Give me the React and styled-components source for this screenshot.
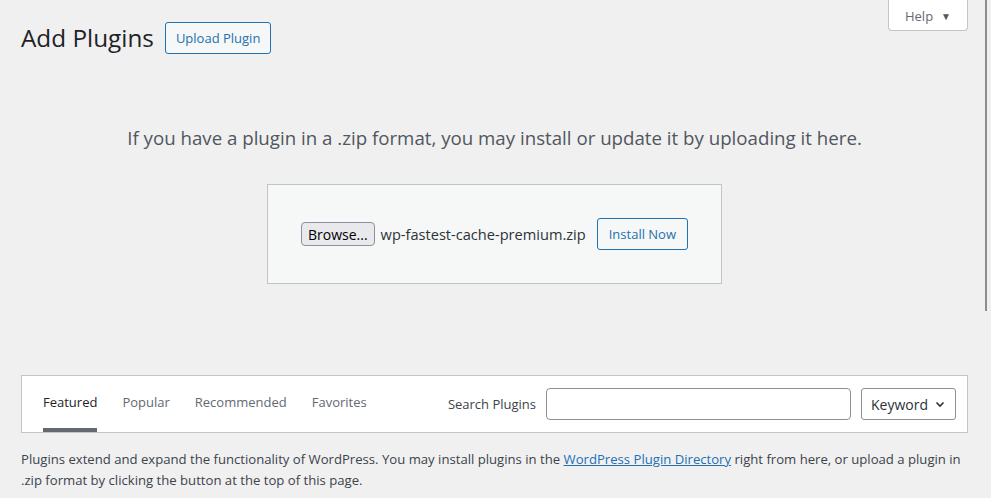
import React from "react";
import styled, { createGlobalStyle } from "styled-components";

const Global = createGlobalStyle`
  html, body { margin: 0; padding: 0; background: #f0f0f1; }
  body { font-family: "Open Sans", "Noto Sans", sans-serif; color: #3c434a; font-size: 13px; }
  * { box-sizing: border-box; }
`;

const Page = styled.div`
  width: 991px;
  height: 498px;
  overflow: hidden;
  padding: 0 23px 0 21px;
  display: flex;
  flex-direction: column;
`;

const TopRow = styled.div`
  display: flex;
  align-items: flex-start;
`;

const TitleGroup = styled.div`
  display: flex;
  align-items: center;
  gap: 11px;
  margin-top: 22px;
  height: 32px;
`;

const Title = styled.h1`
  margin: 0;
  font-size: 24.3px;
  font-weight: 400;
  color: #1d2327;
  line-height: 32px;
`;

const OutlineButton = styled.button`
  font-family: inherit;
  font-size: 13px;
  height: 32px;
  padding: 0 ${p => p.$pad || 10}px;
  border: 1px solid #2271b1;
  border-radius: 3px;
  background: #f6f7f7;
  color: #2271b1;
  cursor: pointer;
`;

const HelpTab = styled.button`
  margin-left: auto;
  width: 80px;
  height: 31px;
  font-family: inherit;
  font-size: 13px;
  color: #646970;
  background: #fff;
  border: 1px solid #c3c4c7;
  border-top: none;
  border-radius: 0 0 4px 4px;
  display: flex;
  align-items: center;
  justify-content: center;
  gap: 8px;
  padding: 2px 0 0;
`;

const Caret = styled.span`
  font-size: 10px;
  color: #50575e;
`;

const HelpText = styled.p`
  margin: 71px 0 0;
  text-align: center;
  font-size: 18.7px;
  line-height: 25px;
  color: #50575e;
`;

const UploadBox = styled.div`
  margin: 34px auto 0;
  width: 455px;
  height: 100px;
  background: #f6f7f7;
  border: 1px solid #c3c4c7;
  display: flex;
  align-items: center;
  justify-content: center;
`;

const BrowseButton = styled.button`
  font-family: inherit;
  font-size: 14px;
  height: 24px;
  padding: 0 6px;
  background: #e9e9ed;
  border: 1px solid #8f8f9d;
  border-radius: 4px;
  color: #000;
`;

const FileName = styled.span`
  margin: 0 11px 0 6px;
  font-size: 14.6px;
  color: #2c3338;
`;

const TabBar = styled.div`
  margin-top: 91px;
  height: 58px;
  background: #fff;
  border: 1px solid #c3c4c7;
  display: flex;
  align-items: stretch;
  padding: 0 11px 0 21px;
`;

const Tabs = styled.div`
  display: flex;
  gap: 25px;
`;

const Tab = styled.a`
  height: 56px;
  padding-top: 17px;
  line-height: 18px;
  font-size: 13px;
  color: ${p => (p.$active ? "#1d2327" : "#646970")};
  border-bottom: 4px solid ${p => (p.$active ? "#646970" : "transparent")};
  text-decoration: none;
`;

const SearchArea = styled.div`
  margin-left: auto;
  display: flex;
  align-items: center;
`;

const SearchLabel = styled.label`
  font-size: 13px;
  color: #3c434a;
  margin-right: 10px;
`;

const SearchInput = styled.input`
  width: 305px;
  height: 32px;
  border: 1px solid #8c8f94;
  border-radius: 4px;
  background: #fff;
  margin-right: 10px;
`;

const Select = styled.div`
  width: 95px;
  height: 32px;
  border: 1px solid #8c8f94;
  border-radius: 3px;
  background: #fff;
  display: flex;
  align-items: center;
  justify-content: space-between;
  padding: 0 9px 0 9px;
  font-size: 14px;
  color: #2c3338;
`;

const Paragraph = styled.p`
  margin: 16px 0 0;
  font-size: 13.14px;
  line-height: 21px;
  color: #3c434a;
`;

const Link = styled.a`
  color: #2271b1;
  text-decoration: underline;
`;

const ScrollLine = styled.div`
  position: fixed;
  top: 0;
  left: 985px;
  width: 2px;
  height: 311px;
  background: #8d8d8d;
`;

export default function App() {
  return (
    <>
      <Global />
      <Page>
        <TopRow>
          <TitleGroup>
            <Title>Add Plugins</Title>
            <OutlineButton>Upload Plugin</OutlineButton>
          </TitleGroup>
          <HelpTab>
            Help <Caret>▼</Caret>
          </HelpTab>
        </TopRow>
        <HelpText>
          If you have a plugin in a .zip format, you may install or update it by uploading it here.
        </HelpText>
        <UploadBox>
          <BrowseButton>Browse...</BrowseButton>
          <FileName>wp-fastest-cache-premium.zip</FileName>
          <OutlineButton $pad={11}>Install Now</OutlineButton>
        </UploadBox>
        <TabBar>
          <Tabs>
            <Tab $active>Featured</Tab>
            <Tab>Popular</Tab>
            <Tab>Recommended</Tab>
            <Tab>Favorites</Tab>
          </Tabs>
          <SearchArea>
            <SearchLabel>Search Plugins</SearchLabel>
            <SearchInput type="search" />
            <Select>
              Keyword
              <svg width="12" height="12" viewBox="0 0 12 12">
                <path d="M2.5 4.5 L6 8 L9.5 4.5" fill="none" stroke="#2c3338" strokeWidth="1.6" />
              </svg>
            </Select>
          </SearchArea>
        </TabBar>
        <Paragraph>
          Plugins extend and expand the functionality of WordPress. You may install plugins in the{" "}
          <Link href="#">WordPress Plugin Directory</Link> right from here, or upload a plugin in .zip format by
          clicking the button at the top of this page.
        </Paragraph>
      </Page>
      <ScrollLine />
    </>
  );
}
